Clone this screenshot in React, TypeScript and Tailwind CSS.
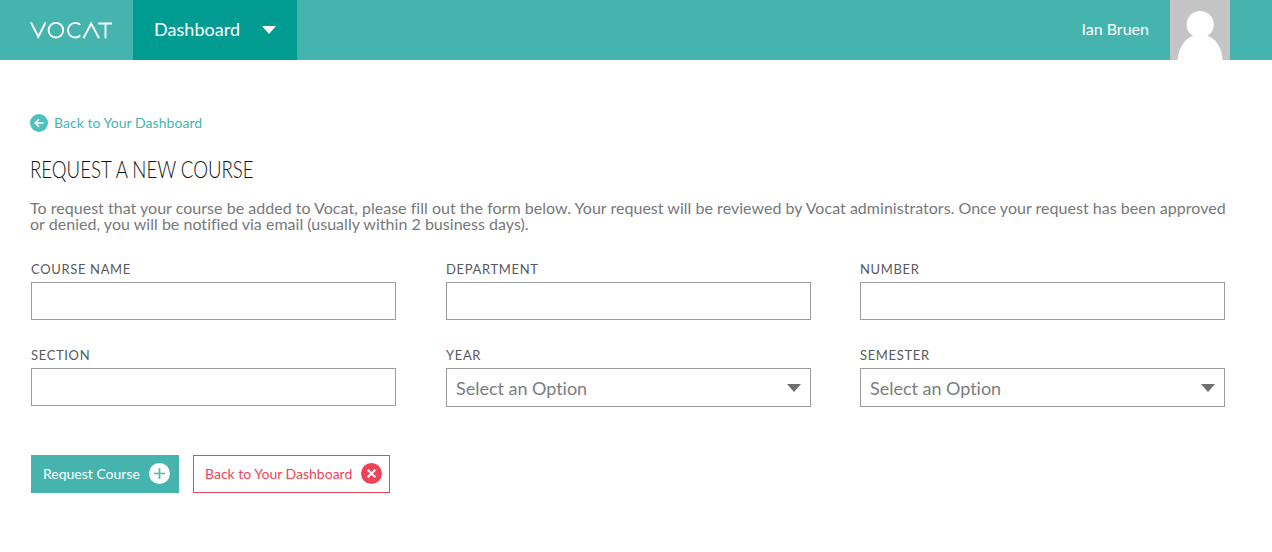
import type { ReactNode } from 'react';

function Caret({ className }: { className: string }) {
  return (
    <svg className={className} width="14" height="8" viewBox="0 0 14 8" fill="currentColor" aria-hidden="true">
      <path d="M0 0h14L7 8z" />
    </svg>
  );
}

function Logo() {
  return (
    <svg
      width="82"
      height="20"
      viewBox="0 0 82 20"
      fill="none"
      stroke="white"
      strokeWidth="1.9"
      role="img"
      aria-label="Vocat"
    >
      <path d="M1 2.4 8.3 16.8 15.6 2.4" />
      <circle cx="25.9" cy="10.2" r="7.3" />
      <path d="M50.3 4.9A7.3 7.3 0 1 0 50.3 15.5" />
      <path d="M53.4 18.3 61.2 3.6 69 18.3" />
      <path d="M68.2 3.5H82M75.5 3.5V18.3" />
    </svg>
  );
}

function Avatar() {
  return (
    <svg className="block bg-[#c4c4c4]" width="60" height="60" viewBox="0 0 60 60" fill="white" aria-hidden="true">
      <circle cx="30.2" cy="24.5" r="13.6" />
      <path d="M7.5 60C8.5 46 17 36.5 24 36h12.5c7 .5 15.5 10 16 24z" />
    </svg>
  );
}

function Field({ label, children }: { label: string; children: ReactNode }) {
  return (
    <div className="flex w-[365px] flex-col">
      <span className="mb-[5px] h-4 text-[13px] leading-4 tracking-[0.65px] whitespace-nowrap text-[#58595b]">
        {label}
      </span>
      {children}
    </div>
  );
}

function TextInput({ label }: { label: string }) {
  return (
    <Field label={label}>
      <input type="text" aria-label={label} className="h-[38px] border border-[#999a9d] bg-white px-2 outline-none" />
    </Field>
  );
}

function Select({ label }: { label: string }) {
  return (
    <Field label={label}>
      <button
        type="button"
        className="flex h-[39px] items-center justify-between border border-[#999a9d] bg-white px-[9px] text-lg tracking-[-0.02px] text-[#7c7d80]"
      >
        <span>Select an Option</span>
        <Caret className="text-[#6d6e71]" />
      </button>
    </Field>
  );
}

export default function App() {
  return (
    <div className="min-h-[552px] w-[1272px] bg-white font-['Lato','Liberation_Sans',sans-serif]">
      <header className="flex h-[60px] items-stretch bg-[#45b4af] text-white">
        <div className="flex w-[133px] items-center pl-[30px]">
          <Logo />
        </div>
        <div className="flex w-[164px] items-center justify-between bg-[#009b91] px-[21px]">
          <span className="pb-0.5 text-lg tracking-[0.05px]">Dashboard</span>
          <Caret className="text-white" />
        </div>
        <div className="mr-[42px] ml-auto flex items-center gap-[21px]">
          <span className="pb-0.5 text-base">Ian Bruen</span>
          <Avatar />
        </div>
      </header>

      <main className="pt-[54px] pl-[30px]">
        <a className="flex h-[18px] w-fit items-center gap-[6px] text-sm tracking-[0.04px] whitespace-nowrap text-[#45b4af]">
          <svg width="18" height="18" viewBox="0 0 18 18" fill="none" aria-hidden="true">
            <circle cx="9" cy="9" r="9" fill="#4bc2bc" />
            <path d="M13.6 9H5.4M9 5.2 5.2 9 9 12.8" stroke="white" strokeWidth="1.6" />
          </svg>
          <span>Back to Your Dashboard</span>
        </a>

        <h1 className="mt-[21px] h-8 w-fit origin-left scale-x-[0.777] text-2xl leading-8 font-light whitespace-nowrap text-[#111111]">
          REQUEST A NEW COURSE
        </h1>

        <p className="mt-[15px] text-base leading-4 tracking-[0.024px] whitespace-nowrap text-[#77787b]">
          <span className="block">
            To request that your course be added to Vocat, please fill out the form below. Your request will be reviewed by
            Vocat administrators. Once your request has been approved
          </span>
          <span className="block">or denied, you will be notified via email (usually within 2 business days).</span>
        </p>

        <form className="pt-[29px] pl-px">
          <div className="grid grid-cols-[415px_414px_365px] gap-y-[27px]">
            <TextInput label="COURSE NAME" />
            <TextInput label="DEPARTMENT" />
            <TextInput label="NUMBER" />
            <TextInput label="SECTION" />
            <Select label="YEAR" />
            <Select label="SEMESTER" />
          </div>

          <div className="mt-[48px] flex gap-[14px] text-sm whitespace-nowrap">
            <button
              type="button"
              className="flex h-[38px] w-[148px] items-center justify-between bg-[#45b4af] pr-[9px] pl-3 text-white"
            >
              <span>Request Course</span>
              <svg className="-mt-px" width="21" height="21" viewBox="0 0 21 21" fill="none" aria-hidden="true">
                <circle cx="10.5" cy="10.5" r="10.5" fill="white" />
                <path d="M10.5 5v11M5 10.5h11" stroke="#4bbdb7" strokeWidth="1.7" />
              </svg>
            </button>
            <button
              type="button"
              className="flex h-[38px] w-[197px] items-center justify-between border border-[#ef4358] bg-white pr-[7px] pl-[11px] text-[#ef4358]"
            >
              <span>Back to Your Dashboard</span>
              <svg className="-mt-px" width="21" height="21" viewBox="0 0 21 21" fill="none" aria-hidden="true">
                <circle cx="10.5" cy="10.5" r="10.5" fill="#ef4358" />
                <path d="m6.7 6.7 7.6 7.6m0-7.6-7.6 7.6" stroke="white" strokeWidth="2" />
              </svg>
            </button>
          </div>
        </form>
      </main>
    </div>
  );
}
